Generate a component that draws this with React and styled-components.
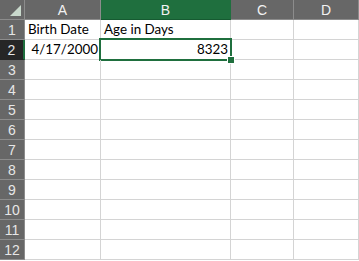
import React from "react";
import styled, { createGlobalStyle } from "styled-components";

const GlobalStyle = createGlobalStyle`
  html, body {
    margin: 0;
    padding: 0;
    background: #ffffff;
  }
`;

const GREEN = "#1f6f3e";
const GRID = "#d4d4d4";

const Sheet = styled.div`
  display: grid;
  grid-template-columns: 25px 76px 130px 63px 65px;
  grid-auto-rows: 20px;
  width: 359px;
  font-family: "Lato", "Liberation Sans", sans-serif;
`;

const Corner = styled.div`
  position: relative;
  background: #676767;
  border-right: 1px solid #8c8c8c;
  border-bottom: 1px solid #8c8c8c;
  box-sizing: border-box;

  &::after {
    content: "";
    position: absolute;
    right: 3px;
    bottom: 3px;
    width: 0;
    height: 0;
    border-left: 11px solid transparent;
    border-bottom: 11px solid #c9d9cc;
  }
`;

const ColHeader = styled.div`
  display: flex;
  align-items: center;
  justify-content: center;
  box-sizing: border-box;
  background: ${(p) => (p.$active ? GREEN : "#676767")};
  border-right: 1px solid ${(p) => (p.$active ? GREEN : "#8c8c8c")};
  border-bottom: 1px solid ${(p) => (p.$active ? "#165a31" : "#8c8c8c")};
  color: #f2f2f2;
  font-family: "Liberation Sans", sans-serif;
  font-size: 14px;
`;

const RowHeader = styled.div`
  display: flex;
  align-items: center;
  justify-content: center;
  box-sizing: border-box;
  background: ${(p) => (p.$active ? "#262626" : "#676767")};
  border-bottom: 1px solid ${(p) => (p.$active ? "#262626" : "#8c8c8c")};
  border-right: ${(p) => (p.$active ? `2px solid ${GREEN}` : "1px solid #8c8c8c")};
  color: #e6e6e6;
  font-family: "Liberation Sans", sans-serif;
  font-size: 14px;
  padding-top: 1px;
`;

const Cell = styled.div`
  position: relative;
  display: flex;
  align-items: flex-end;
  justify-content: ${(p) => (p.$right ? "flex-end" : "flex-start")};
  box-sizing: border-box;
  padding: 0 2px 1px 3px;
  border-right: 1px solid ${GRID};
  border-bottom: 1px solid ${GRID};
  color: #000;
  font-size: 13.4px;
  line-height: 18px;
  white-space: nowrap;
`;

const Selection = styled.div`
  position: absolute;
  left: -2px;
  top: -2px;
  right: -2px;
  bottom: -2px;
  border: 2px solid ${GREEN};
  pointer-events: none;
`;

const FillHandle = styled.div`
  position: absolute;
  right: -5px;
  bottom: -5px;
  width: 6px;
  height: 6px;
  background: ${GREEN};
  border: 1px solid #fff;
  z-index: 2;
`;

const columns = ["A", "B", "C", "D"];
const data = {
  1: { A: { text: "Birth Date" }, B: { text: "Age in Days" } },
  2: { A: { text: "4/17/2000", right: true }, B: { text: "8323", right: true } },
};

export default function App() {
  const rows = Array.from({ length: 12 }, (_, i) => i + 1);
  return (
    <>
      <GlobalStyle />
      <Sheet>
        <Corner />
        {columns.map((c) => (
          <ColHeader key={c} $active={c === "B"}>
            {c}
          </ColHeader>
        ))}
        {rows.map((r) => (
          <React.Fragment key={r}>
            <RowHeader $active={r === 2}>{r}</RowHeader>
            {columns.map((c) => {
              const d = data[r] && data[r][c];
              const selected = r === 2 && c === "B";
              return (
                <Cell key={c} $right={d && d.right}>
                  {d ? d.text : ""}
                  {selected && (
                    <>
                      <Selection />
                      <FillHandle />
                    </>
                  )}
                </Cell>
              );
            })}
          </React.Fragment>
        ))}
      </Sheet>
    </>
  );
}
